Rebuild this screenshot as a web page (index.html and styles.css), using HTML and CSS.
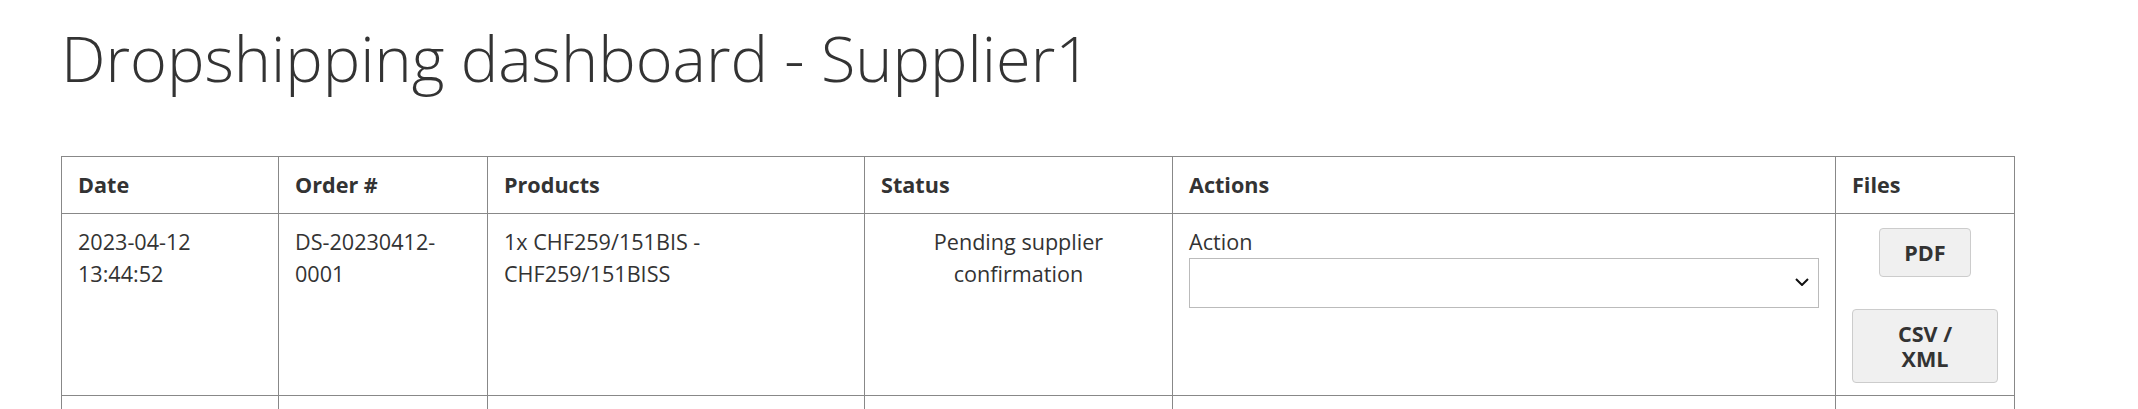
FILE: index.html
```html
<!DOCTYPE html>
<html lang="en">
<head>
<meta charset="utf-8">
<title>Dropshipping dashboard - Supplier1</title>
<link rel="stylesheet" href="styles.css">
</head>
<body>
<main class="page">
  <h1 class="title">Dropshipping dashboard - Supplier1</h1>
  <table class="orders">
    <colgroup>
      <col class="c-date">
      <col class="c-order">
      <col class="c-products">
      <col class="c-status">
      <col class="c-actions">
      <col class="c-files">
    </colgroup>
    <thead>
      <tr>
        <th>Date</th>
        <th>Order #</th>
        <th>Products</th>
        <th>Status</th>
        <th>Actions</th>
        <th>Files</th>
      </tr>
    </thead>
    <tbody>
      <tr>
        <td>2023-04-12 13:44:52</td>
        <td>DS-20230412-0001</td>
        <td>1x CHF259/151BIS - CHF259/151BISS</td>
        <td class="status">Pending supplier confirmation</td>
        <td>
          <label class="action-label">Action</label>
          <div class="select-wrap">
            <select class="action-select"><option></option></select>
            <svg class="chev" width="14" height="8" viewBox="0 0 14 8"><path d="M1 1l6 6 6-6" fill="none" stroke="#111" stroke-width="2"/></svg>
          </div>
        </td>
        <td>
          <div class="files">
            <button class="btn">PDF</button>
            <button class="btn">CSV / XML</button>
          </div>
        </td>
      </tr>
      <tr>
        <td class="later"></td>
        <td class="later"></td>
        <td class="later"></td>
        <td class="later"></td>
        <td class="later"></td>
        <td class="later">
          <div class="files">
            <button class="btn">PDF</button>
          </div>
        </td>
      </tr>
    </tbody>
  </table>
</main>
</body>
</html>
```
FILE: styles.css
```css
html, body {
  margin: 0;
  padding: 0;
  background: #fff;
}
body {
  font-family: "Open Sans", "Liberation Sans", sans-serif;
  font-size: 21.6px;
  line-height: 1.5;
  color: #333;
}
.page {
  padding: 0 61px;
}
.title {
  margin: 0;
  padding-top: 20px;
  font-size: 63px;
  font-weight: 300;
  line-height: 1.2;
  color: #333;
}
.orders {
  margin-top: 60px;
  border-collapse: collapse;
  table-layout: fixed;
  width: 1953px;
}
.c-date { width: 217px; }
.c-order { width: 209px; }
.c-products { width: 377px; }
.c-status { width: 308px; }
.c-actions { width: 663px; }
.c-files { width: 179px; }
.orders th,
.orders td {
  border: 1px solid #888;
  padding: 12px 16px;
  text-align: left;
  vertical-align: top;
}
.orders th {
  font-weight: 700;
}
.orders td.status {
  text-align: center;
}
.orders td.later {
  height: 120px;
}
.action-label {
  display: block;
}
.select-wrap {
  position: relative;
}
.action-select {
  display: block;
  width: 100%;
  height: 50px;
  margin: 0;
  border: 1px solid #bbb;
  border-radius: 0;
  background: #fff;
  appearance: none;
  -webkit-appearance: none;
  font: inherit;
}
.chev {
  position: absolute;
  right: 10px;
  top: 20px;
}
.files {
  display: flex;
  flex-direction: column;
  align-items: center;
  gap: 32px;
  padding-top: 2px;
}
.btn {
  font-family: "Open Sans", "Liberation Sans", sans-serif;
  font-size: 21.6px;
  font-weight: 700;
  line-height: 25px;
  color: #333;
  background: #f0f0f0;
  border: 1px solid #ccc;
  border-radius: 4px;
  padding: 11px 24px;
  max-width: 100%;
}
```
